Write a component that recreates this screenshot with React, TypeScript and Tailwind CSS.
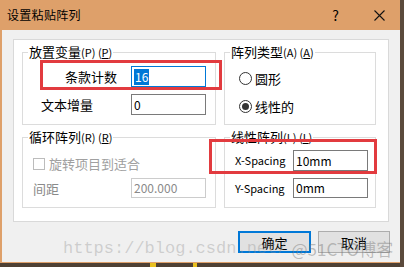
import React from 'react';

const cjk = { fontFamily: '"Noto Sans CJK SC", "Noto Sans", sans-serif' };

const GroupBox: React.FC<{ title: string; mnemonic: string; className?: string; children: React.ReactNode }> = ({
  title,
  mnemonic,
  className,
  children,
}) => (
  <div className={`relative border border-[#dcdcdc] ${className ?? ''}`}>
    <span className="absolute top-[-10px] left-[5px] bg-white px-[1px] flex items-baseline leading-[18px]">
      <span className="text-[13px] text-black">{title}</span>
      <span className="text-[11px] text-black">
        ({mnemonic}) (<span className="underline">{mnemonic}</span>)
      </span>
    </span>
    {children}
  </div>
);

const TextBox: React.FC<{ value: string; active?: boolean; disabled?: boolean }> = ({ value, active, disabled }) => (
  <div
    className={`w-[75px] h-full flex items-center px-[2px] text-[12px] leading-none bg-white border ${
      active ? 'border-[#0078d7]' : disabled ? 'border-[#cccccc] text-[#8a8a8a]' : 'border-[#7a7a7a] text-black'
    }`}
  >
    {active ? <span className="bg-[#0078d7] text-white px-[1px] py-[2px]">{value}</span> : value}
  </div>
);

const Radio: React.FC<{ label: string; checked?: boolean }> = ({ label, checked }) => (
  <div className="flex items-center h-[20px] pl-[14px]">
    <span className="w-[13px] h-[13px] rounded-full border border-[#333] bg-white flex items-center justify-center">
      {checked && <span className="w-[7px] h-[7px] rounded-full bg-[#333]" />}
    </span>
    <span className="ml-[3px] text-[13px] leading-none text-black">{label}</span>
  </div>
);

export default function App() {
  return (
    <div
      className="w-[404px] h-[267px] relative overflow-hidden bg-[#dea06a] border-r-[4px] border-r-[#5b4a3c] flex flex-col"
      style={cjk}
    >
      {/* Title bar */}
      <div className="h-[30px] flex items-center pl-[7px] pr-[10px] shrink-0">
        <span className="text-[12px] text-black tracking-[0.3px]">设置粘贴阵列</span>
        <span className="ml-auto mr-[35px] text-[14px] text-black">?</span>
        <svg width="11" height="11" viewBox="0 0 11 11" className="mr-[5px]">
          <path d="M0.5 0.5 L10.5 10.5 M10.5 0.5 L0.5 10.5" stroke="#111" strokeWidth="1.1" />
        </svg>
      </div>

      {/* Body */}
      <div className="h-[232px] ml-[2px] bg-[#f0f0f0] flex flex-col">
        <div className="ml-[11px] mt-[9px] w-[376px] h-[183px] bg-white border border-[#d9d9d9] pl-[8px] pt-[12px]">
          <div className="grid grid-cols-[194px_152px] grid-rows-[73px_71px] gap-x-[8px] gap-y-[12px]">
            <GroupBox title="放置变量" mnemonic="P">
              <div className="flex flex-col pt-[13px] gap-[7px]">
                <div className="flex items-center h-[21px]">
                  <span className="w-[108px] pl-[42px] text-[13px] leading-none">条款计数</span>
                  <TextBox value="16" active />
                </div>
                <div className="flex items-center h-[21px]">
                  <span className="w-[108px] pl-[18px] text-[13px] leading-none">文本增量</span>
                  <TextBox value="0" />
                </div>
              </div>
            </GroupBox>

            <GroupBox title="阵列类型" mnemonic="A">
              <div className="flex flex-col pt-[15px] gap-[8px]">
                <Radio label="圆形" />
                <Radio label="线性的" checked />
              </div>
            </GroupBox>

            <GroupBox title="循环阵列" mnemonic="R">
              <div className="flex flex-col pt-[19px]">
                <div className="flex items-center h-[13px] pl-[10px]">
                  <span className="w-[12px] h-[12px] border border-[#bcbcbc] bg-white" />
                  <span className="ml-[4px] text-[13px] leading-none text-[#a0a0a0]">旋转项目到适合</span>
                </div>
                <div className="flex items-center h-[20px] mt-[8px]">
                  <span className="w-[108px] pl-[10px] text-[13px] leading-none text-[#8a8a8a]">间距</span>
                  <TextBox value="200.000" disabled />
                </div>
              </div>
            </GroupBox>

            <GroupBox title="线性阵列" mnemonic="L">
              <div className="flex flex-col pt-[12px] gap-[7px]">
                <div className="flex items-center h-[21px]">
                  <span className="w-[68px] pl-[10px] text-[11px] leading-none">X-Spacing</span>
                  <TextBox value="10mm" />
                </div>
                <div className="flex items-center h-[20px]">
                  <span className="w-[68px] pl-[10px] text-[11px] leading-none">Y-Spacing</span>
                  <TextBox value="0mm" />
                </div>
              </div>
            </GroupBox>
          </div>
        </div>

        {/* Buttons */}
        <div className="flex justify-end gap-[7px] mt-[9px] pr-[10px]">
          <button className="w-[73px] h-[22px] bg-[#e1e1e1] border-2 border-[#0078d7] text-[13px] leading-none text-black">
            确定
          </button>
          <button className="w-[72px] h-[22px] bg-[#e1e1e1] border border-[#adadad] text-[13px] leading-none text-black">
            取消
          </button>
        </div>
      </div>
      <div className="h-[1px] shrink-0" />
      <div className="h-[4px] bg-[#4e4034] shrink-0 relative">
        <span className="absolute left-[150px] top-0 w-[6px] h-[4px] bg-[#e8c020]" />
        <span className="absolute left-[193px] top-0 w-[4px] h-[4px] bg-[#e8c020]" />
      </div>

      {/* Annotation boxes */}
      <div className="absolute left-[40px] top-[60px] w-[182px] h-[30px] border-[3px] border-[#e23b3f]" />
      <div className="absolute left-[209px] top-[139px] w-[168px] h-[35px] border-[3px] border-[#e23b3f]" />

      {/* Watermark */}
      <div className="absolute left-[63px] top-[236px] flex items-center pointer-events-none">
        <span className="text-[17px] text-[rgba(140,140,140,0.35)]" style={{ fontFamily: '"Liberation Mono", monospace' }}>
          https://blog.csdn.net/
        </span>
        <span className="ml-[4px] text-[17px] text-[rgba(120,120,120,0.45)]" style={cjk}>
          @51CTO博客
        </span>
      </div>
    </div>
  );
}
